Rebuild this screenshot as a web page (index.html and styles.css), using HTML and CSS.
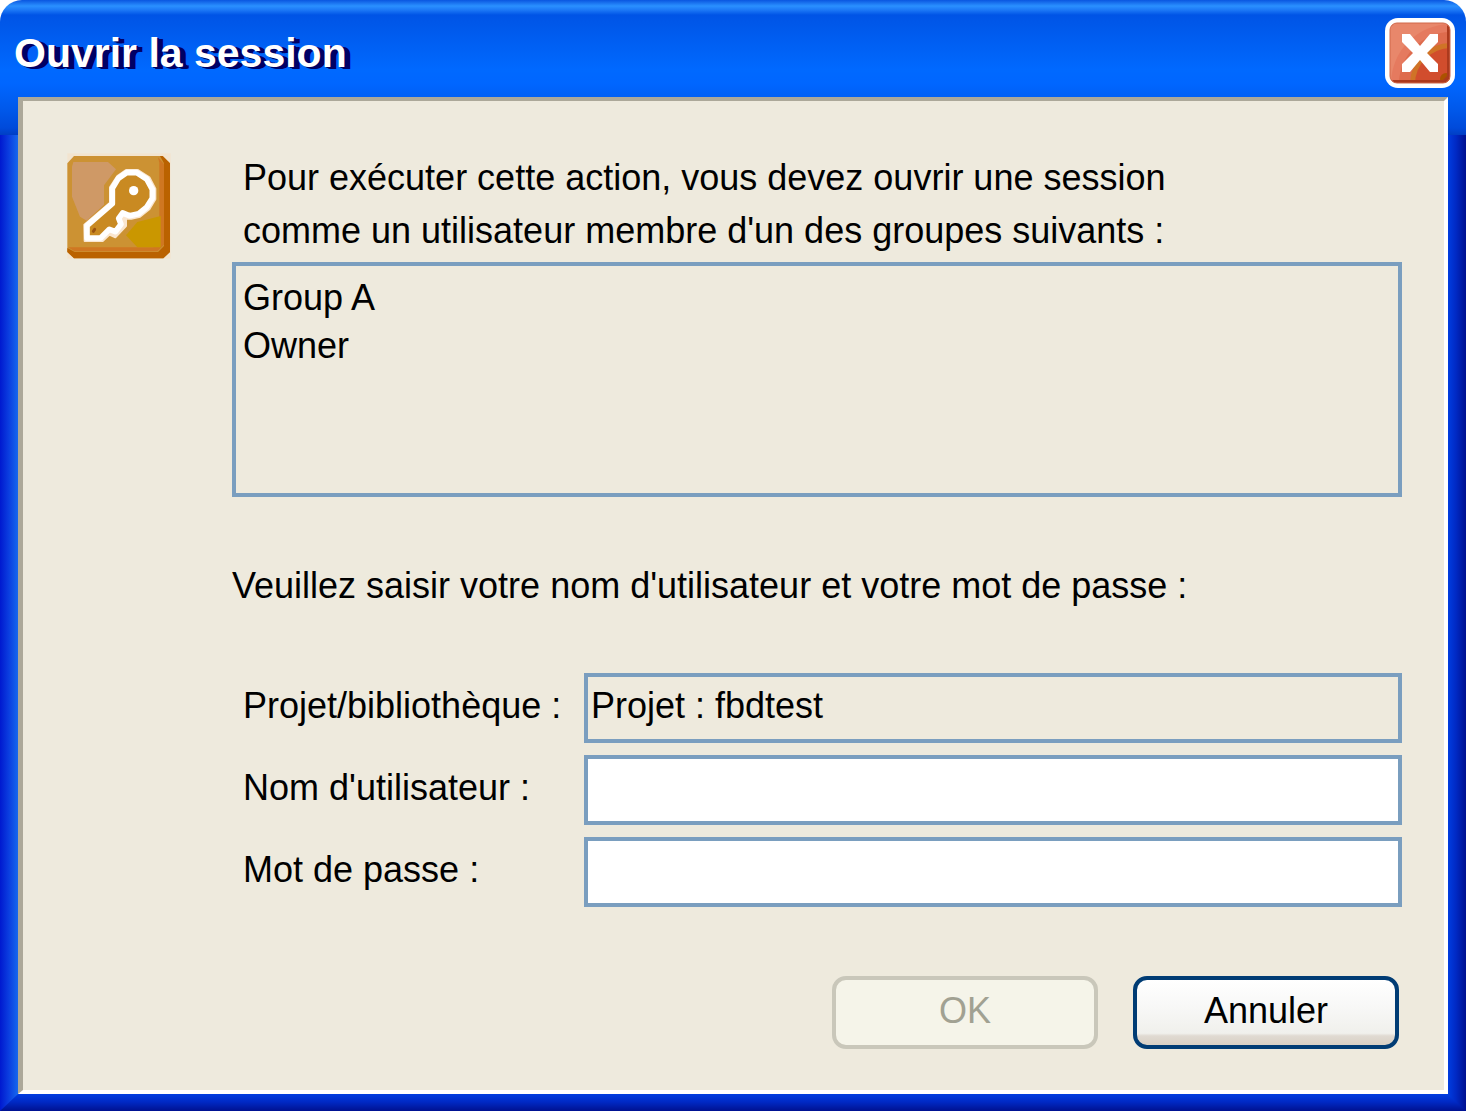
FILE: index.html
```html
<!DOCTYPE html>
<html lang="fr">
<head>
<meta charset="utf-8">
<meta name="viewport" content="width=device-width, initial-scale=1">
<title>Ouvrir la session</title>
<link rel="stylesheet" href="styles.css">
</head>
<body>
<main class="window">
  <header class="titlebar">
    <h1 class="title">Ouvrir la session</h1>
    <button class="close" type="button" aria-label="Fermer">
      <svg class="close-icon" viewBox="0 0 70 70" aria-hidden="true">
        <defs>
          <clipPath id="face"><rect x="5" y="5" width="60" height="60" rx="7"/></clipPath>
        </defs>
        <rect width="70" height="70" rx="13" fill="#fff"/>
        <g clip-path="url(#face)">
          <rect x="4" y="4" width="62" height="62" fill="#e8876b"/>
          <circle cx="66" cy="66" r="60" fill="#e57a5f"/>
          <circle cx="66" cy="66" r="52" fill="#de6b4d"/>
          <circle cx="66" cy="66" r="41" fill="#d07327"/>
          <circle cx="66" cy="66" r="36" fill="#d14d2d"/>
          <circle cx="61" cy="61" r="6" fill="#ab5200"/>
          <path d="M62 8l4-4v62H4l4-4h50l4-4z" fill="#ac3a1e"/>
        </g>
        <rect x="5" y="5" width="60" height="60" rx="7" fill="none" stroke="#d0684a"/>
        <path d="M17 16h8l10 12 10-12h8v8L42 35l11 11v8h-8L35 42 25 54h-8v-8l11-11L17 24z" fill="#fff"/>
      </svg>
    </button>
  </header>
  <form class="client">
    <svg class="key" viewBox="51 39 312 318" aria-hidden="true">
      <rect x="52" y="40" width="310" height="316" fill="#f2e4cf"/>
      <path d="M72 48H338L360 70V336L340 355H72L52 336V70z" fill="#cc9233"/>
      <path d="M330 48h8l22 22v266l-20 19H72l-20-19v-12l22 12h250l18-18V70z" fill="#ba6200"/>
      <path d="M324 52l18 20v242l-20 20H74l-20-12h256l18-18V68z" fill="#cf7722"/>
      <path d="M70 66h104l24 22-36 48v58l-52 48-20-12-24-60V80z" fill="#cf9966"/>
      <path d="M262 246l70-18v94h-70l-34-36z" fill="#ca9700"/>
      <path d="M103 254L180 188V142L202 108 228 90H264L298 112 316 146V178L298 208 270 230 244 236H228V258L196 292 178 284 158 303H104z" fill="#fae6cf" stroke="#fae6cf" stroke-width="6" stroke-linejoin="round"/>
      <path d="M111 257L187 191V145L205 115 230 98H260L290 117 307 148V175L290 202 266 221 238 227L218 219 206 235 213 253 196 275 178 268 152 294H111z" fill="#c98a22" stroke="#fff" stroke-width="17" stroke-linejoin="round"/>
      <circle cx="251" cy="152" r="14" fill="#fff"/>
      <path d="M130 274l4-6" stroke="#9b5410" stroke-width="9" stroke-linecap="round"/>
    </svg>
    <div class="body">
      <p class="message indent">Pour exécuter cette action, vous devez ouvrir une session<br>comme un utilisateur membre d'un des groupes suivants :</p>
      <ul class="groups">
        <li>Group A</li>
        <li>Owner</li>
      </ul>
      <p class="message prompt">Veuillez saisir votre nom d'utilisateur et votre mot de passe :</p>
      <div class="fields">
        <label for="project">Projet/bibliothèque :</label>
        <input id="project" class="readonly" type="text" value="Projet : fbdtest" readonly>
        <label for="user">Nom d'utilisateur :</label>
        <input id="user" type="text">
        <label for="password">Mot de passe :</label>
        <input id="password" type="password">
      </div>
      <div class="actions">
        <button class="btn" type="submit" disabled>OK</button>
        <button class="btn cancel" type="button">Annuler</button>
      </div>
    </div>
  </form>
  <div class="frame-bottom"></div>
</main>
</body>
</html>
```

FILE: styles.css
```css
* { box-sizing: border-box; }

body {
  margin: 0;
  padding-right: 1px;
  background: #fff;
  color: #000;
  font: 36px/48px "Liberation Sans", Arial, sans-serif;
}

.window {
  display: flex;
  flex-direction: column;
  min-height: 100vh;
  border-radius: 22px 22px 0 0;
  background:
    linear-gradient(#0a56e0 0, #2a90ff 6px, #1c78f6 10px, #0054e6 15px, #0058ea 25px, #0069ff 70px, #0066ff 84px, #0058ea 110px, #004ada 128px, #003ec4 135px) top / 100% 135px no-repeat,
    linear-gradient(to right, #0019cf, #0b3fe0 9px, #1668ee 18px) left / 18px 100% no-repeat,
    linear-gradient(to right, #003de0, #0029c4 8px, #001190 18px) right / 18px 100% no-repeat;
}

.titlebar {
  display: flex;
  justify-content: space-between;
  align-items: center;
  height: 97px;
  padding: 9px 11px 0 14px;
}

.title {
  margin: 0;
  color: #fff;
  font-size: 41px;
  line-height: 54px;
  text-shadow: 2px 1px #000064, 4px 2px #000064, 6px 2px #000064;
}

.close {
  width: 70px;
  height: 70px;
  padding: 0;
  border: 0;
  background: none;
}

.close-icon { display: block; }

.client {
  display: flex;
  flex: 1;
  align-items: flex-start;
  gap: 61px;
  margin: 0 18px;
  padding: 50px 42px 41px 44px;
  border: solid;
  border-width: 4px 4px 4px 5px;
  border-color: #aca899 #fff #fff #aca899;
  background: #eeeadd;
}

.key {
  flex: none;
  width: 104px;
  height: 106px;
  margin-top: 2px;
}

.body { flex: 1; }

.message {
  margin: 0;
  line-height: 53px;
}

.indent { padding-left: 11px; }

.groups {
  height: 235px;
  margin: 5px 0 62px;
  padding: 8px 7px;
  border: 4px solid #7a9ebf;
  list-style: none;
}

.prompt { margin-bottom: 61px; }

.fields {
  display: grid;
  grid-template-columns: 341px 1fr;
  gap: 12px 0;
  padding-left: 11px;
}

label {
  padding: 9px 0 13px;
  white-space: nowrap;
}

input {
  width: 100%;
  min-width: 0;
  height: 70px;
  padding: 0 3px 4px;
  border: 4px solid #7a9ebf;
  border-radius: 0;
  outline: 0;
  background: #fff;
  color: inherit;
  font: inherit;
}

.readonly { background: #eeeadd; }

.actions {
  display: flex;
  justify-content: flex-end;
  gap: 35px;
  margin-top: 69px;
  padding-right: 3px;
}

.btn {
  width: 266px;
  height: 73px;
  padding: 0 0 4px;
  border: 4px solid #c9c7ba;
  border-radius: 14px;
  background: #f5f4e9;
  color: #a1a192;
  font: inherit;
}

.cancel {
  border-color: #003c74;
  background: linear-gradient(#fff, #f8f8f7 40%, #f0f0ec 82%, #e0dad2 86%, #d8d0c4);
  color: #000;
}

.frame-bottom {
  height: 17px;
  background: linear-gradient(#003de0, #0029c4 8px, #001190);
  clip-path: polygon(0 100%, 18px 0, calc(100% - 18px) 0, 100% 100%);
}
```
